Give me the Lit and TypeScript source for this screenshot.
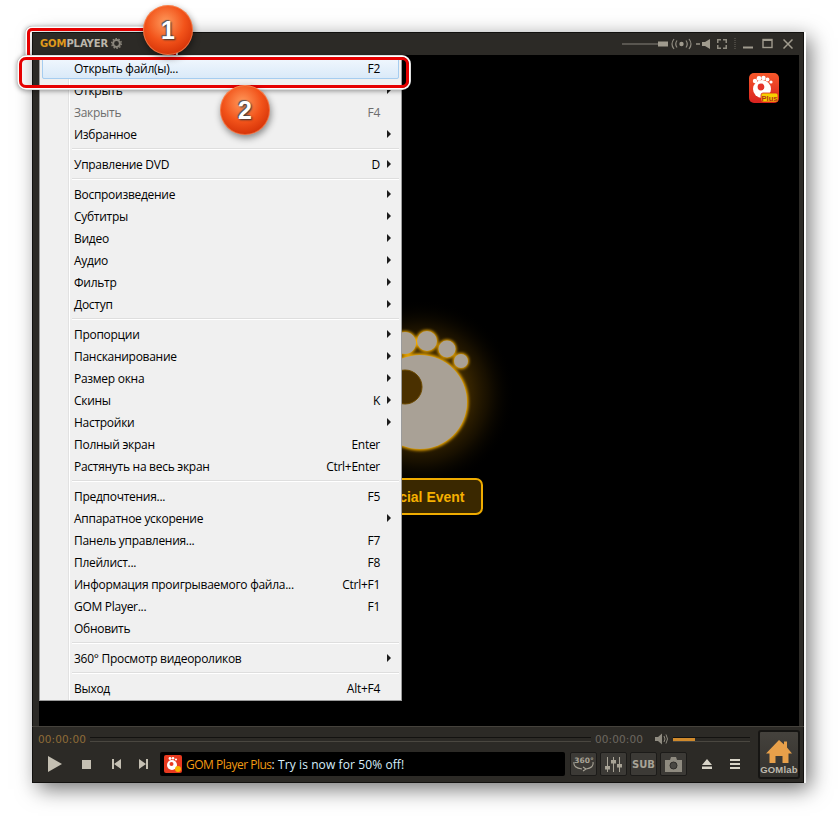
import { LitElement, html, css, svg } from "lit";
import { customElement } from "lit/decorators.js";

type Row = { t: string; k?: string; sub?: boolean; dis?: boolean; hot?: boolean } | null;
const rows: Row[] = [
  { t: "Открыть файл(ы)...", k: "F2", hot: true },
  { t: "Открыть", sub: true },
  { t: "Закрыть", k: "F4", dis: true },
  { t: "Избранное", sub: true },
  null,
  { t: "Управление DVD", k: "D", sub: true },
  null,
  { t: "Воспроизведение", sub: true },
  { t: "Субтитры", sub: true },
  { t: "Видео", sub: true },
  { t: "Аудио", sub: true },
  { t: "Фильтр", sub: true },
  { t: "Доступ", sub: true },
  null,
  { t: "Пропорции", sub: true },
  { t: "Пансканирование", sub: true },
  { t: "Размер окна", sub: true },
  { t: "Скины", k: "K", sub: true },
  { t: "Настройки", sub: true },
  { t: "Полный экран", k: "Enter" },
  { t: "Растянуть на весь экран", k: "Ctrl+Enter" },
  null,
  { t: "Предпочтения...", k: "F5" },
  { t: "Аппаратное ускорение", sub: true },
  { t: "Панель управления...", k: "F7" },
  { t: "Плейлист...", k: "F8" },
  { t: "Информация проигрываемого файла...", k: "Ctrl+F1" },
  { t: "GOM Player...", k: "F1" },
  { t: "Обновить" },
  null,
  { t: "360° Просмотр видеороликов", sub: true },
  null,
  { t: "Выход", k: "Alt+F4" },
];

const foot = svg`
  <defs>
    <radialGradient id="gl" cx="50%" cy="50%" r="50%">
      <stop offset="0" stop-color="#a87200" stop-opacity=".6"/>
      <stop offset=".5" stop-color="#8a5c00" stop-opacity=".42"/>
      <stop offset=".72" stop-color="#6a4600" stop-opacity=".22"/>
      <stop offset="1" stop-color="#000" stop-opacity="0"/>
    </radialGradient>
    <filter id="bl" x="-30%" y="-30%" width="160%" height="160%"><feGaussianBlur stdDeviation="1.4"/></filter>
  </defs>
  <circle cx="111" cy="104" r="95" fill="url(#gl)"/>
  <g fill="#f5ad00" filter="url(#bl)">
    <circle cx="111" cy="112" r="48.5"/><circle cx="96" cy="53" r="12"/><circle cx="118" cy="51" r="11"/>
    <circle cx="138" cy="59" r="9.5"/><circle cx="152" cy="71" r="8"/>
  </g>
  <g fill="#a9a196">
    <circle cx="111" cy="112" r="47"/><circle cx="96" cy="53" r="11"/><circle cx="118" cy="51" r="10"/>
    <circle cx="138" cy="59" r="8.5"/><circle cx="152" cy="71" r="7"/>
  </g>
  <circle cx="96" cy="97" r="17" fill="#4a3000" stroke="#6d4a00" stroke-width="1"/>
`;

@customElement("app-root")
export class AppRoot extends LitElement {
  static styles = css`
    :host { display: block; width: 838px; height: 816px; background: #fff; padding: 32px 34px 33px 32px; box-sizing: border-box; font-family: "Open Sans", "Liberation Sans", sans-serif; overflow: hidden; }
    .win { position: relative; height: 100%; display: flex; flex-direction: column; background: #2c2a26; box-shadow: 6px 6px 20px rgba(0,0,0,.55), inset 0 0 0 1px #12110f; }
    .win::after { content: ""; position: absolute; left: 100%; top: 0; bottom: 0; width: 2px; background: linear-gradient(#fff, #f2f2f2); }
    .title { height: 23px; flex: none; display: flex; align-items: center; padding: 0 11px 0 8px; }
    .logo { font: bold 10px "DejaVu Sans", sans-serif; letter-spacing: -.1px; color: #bcb7ab; display: flex; align-items: center; gap: 3px; }
    .logo b { color: #e09a1c; }
    .tools { margin-left: auto; display: flex; align-items: center; }
    .body { flex: 1; margin: 0 5px 0 7px; background: #000; position: relative; display: flex; flex-direction: column; align-items: center; }
    .foot { margin-top: 235px; margin-bottom: -12px; display: block; flex: none; }
    .event { width: 128px; height: 37px; flex: none; box-sizing: border-box; border: 2px solid #f0ac00; border-radius: 7px; background: #3a2800; color: #f5b000; font: bold 14px "Liberation Sans", sans-serif; display: flex; align-items: center; justify-content: center; }
    .plus { position: absolute; left: 710px; top: 18px; }
    .ctl { height: 57px; flex: none; box-sizing: border-box; border-top: 1px solid #45423c; display: flex; flex-direction: column; }
    .row1 { height: 24px; display: flex; align-items: center; padding-left: 6px; width: 718px; box-sizing: border-box; }
    .time { font: 10.5px "DejaVu Sans", sans-serif; color: #8f6c38; letter-spacing: .1px; width: 50px; white-space: nowrap; flex: none; }
    .time.r { color: #6c6860; margin-left: 4px; }
    .seek { flex: 1; height: 3px; margin-left: 2px; border-top: 1px solid #131210; border-bottom: 1px solid #4a4740; }
    .spk { margin-left: 10px; }
    .vol { margin-left: 4px; width: 77px; height: 3px; border-top: 1px solid #131210; border-bottom: 1px solid #4a4740; position: relative; }
    .vol i { display: block; width: 22px; height: 3px; background: #d08a2c; }
    .row2 { display: flex; align-items: center; padding-left: 16px; height: 26px; }
    .row2 > svg { flex: none; }
    .tick { width: 405px; height: 24px; margin-left: 12px; background: #000; border-radius: 2px; display: flex; align-items: center; gap: 4px; padding-left: 4px; box-sizing: border-box; font-size: 12px; letter-spacing: .1px; color: #d8eefb; white-space: nowrap; }
    .tick b { font-weight: 400; color: #f29a12; letter-spacing: -.5px; }
    .btns { display: flex; gap: 3px; margin-left: 5px; }
    .btn { width: 27px; height: 24px; box-sizing: border-box; background: #3c3a36; border: 1px solid #1c1b19; border-radius: 2px; display: flex; align-items: center; justify-content: center; font: bold 10px "DejaVu Sans", sans-serif; color: #a8a396; }
    .home { position: absolute; right: 4px; bottom: 4px; width: 42px; height: 49px; box-sizing: border-box; background: linear-gradient(#45423d, #33312d); border: 2px solid #161513; border-radius: 3px; display: flex; flex-direction: column; align-items: center; padding-top: 8px; font: bold 9.500px "Liberation Sans", sans-serif; color: #bdb8ad; letter-spacing: .2px; }
    .home span { margin-top: 1px; }
    .menu { position: absolute; left: 7px; top: 24px; width: 363px; height: 645px; box-sizing: border-box; background: #f0f0f0; border: 1px solid #9b9b9b; padding: 0 2px; font-size: 12px; letter-spacing: -.28px; color: #000; }
    .gut { position: absolute; left: 28px; top: 0; bottom: 0; width: 2px; background: linear-gradient(90deg, #e2e2e2 50%, #fff 50%); }
    .it { height: 22px; display: flex; align-items: center; padding-left: 32px; position: relative; box-sizing: border-box; white-space: nowrap; }
    .it.dis { color: #6d6d6d; }
    .it.hot { background: linear-gradient(#f2f8fe, #d9e9f8); outline: 1px solid #a6cdf0; outline-offset: -1px; border-radius: 2px; }
    .k { position: absolute; right: 19px; }
    .arr { position: absolute; right: 8px; top: 7px; width: 0; height: 0; border-left: 4px solid #1c1c1c; border-top: 4px solid transparent; border-bottom: 4px solid transparent; }
    .sep { height: 8px; margin-left: 28px; position: relative; }
    .sep::after { content: ""; position: absolute; left: 2px; right: 0; top: 3px; height: 2px; background: linear-gradient(#dedede 50%, #fff 50%); }
    .mark { position: absolute; box-sizing: border-box; border: 3px solid #e60000; border-radius: 5px; box-shadow: 0 0 0 1.5px #fff, 0 0 0 2px #bbb, 0 1px 5px 2px rgba(0,0,0,.4); }
    .m1 { left: -5px; top: -4px; width: 149px; height: 31px; border-bottom-color: transparent; clip-path: inset(-6px -6px 3px -6px); }
    .m2 { left: -13px; top: 25px; width: 390px; height: 31px; border-radius: 7px; }
    .ball { position: absolute; width: 50px; height: 50px; border-radius: 50%; background: radial-gradient(circle at 45% 35%, #ff9a5c, #f2531a 45%, #c92500 90%); box-shadow: 1px 3px 7px rgba(0,0,0,.45), inset 0 0 0 1px rgba(255,190,140,.4); display: flex; align-items: center; justify-content: center; font: bold 25px "Liberation Sans", sans-serif; color: #fff; text-shadow: 1px 1px 2px #333, -1px -1px 1px #555; }
    .b1 { left: 111px; top: -27px; }
    .b2 { left: 188px; top: 53px; }
  `;

  render() {
    return html`<div class="win">
      <div class="title">
        <div class="logo"><span><b>GOM</b>PLAYER</span>
          <svg width="11" height="11" viewBox="0 0 11 11"><circle cx="5.5" cy="5.5" r="3.4" fill="none" stroke="#8b867c" stroke-width="2"/><circle cx="5.5" cy="5.5" r="4.8" fill="none" stroke="#8b867c" stroke-width="1.4" stroke-dasharray="1.5 1.5"/></svg>
        </div>
        <div class="tools">
          <svg width="160" height="14" viewBox="0 0 160 14">
            <path d="M0 7h36" stroke="#86827a" stroke-width="1"/><rect x="36" y="4.5" width="10" height="5" fill="#a09b8e"/>
            <g transform="translate(-6 0)" fill="none" stroke="#8f8b80" stroke-width="1.2"><path d="M58 2q-4 5 0 10M61 3.500q-2.500 3.500 0 7M70 3.500q2.500 3.500 0 7M73 2q4 5 0 10"/></g><circle cx="59.500" cy="7" r="2.200" fill="#a09b8e"/>
            <g transform="translate(-6 0)"><path d="M80 7h4" stroke="#a09b8e" stroke-width="1.400"/><path d="M86 5h3l5-3v10l-5-3h-3z" fill="#a09b8e"/></g>
            <g transform="translate(-8 0)" fill="#8f8b80"><path d="M103 2h4v1.500h-2.500v2.500h-1.500zM113 2v4h-1.500v-2.500h-2.500v-1.500zM103 12v-4h1.500v2.500h2.500v1.500zM113 12h-4v-1.500h2.500v-2.500h1.500z"/></g>
            <path d="M113 1v12" stroke="#68645c" stroke-dasharray="1 1"/>
            <path d="M121 10.500h10" stroke="#a09b8e" stroke-width="2"/>
            <rect x="141" y="2.500" width="9" height="8" fill="none" stroke="#a09b8e" stroke-width="1.400"/><path d="M141 3h9" stroke="#a09b8e" stroke-width="2"/>
          </svg>
          <svg style="margin-left:1px" width="10" height="10" viewBox="0 0 10 10"><path d="M.5.500l9 9M9.500.500l-9 9" stroke="#a09b8e" stroke-width="1.500"/></svg>
        </div>
      </div>
      <div class="body">
        <svg class="foot" width="220" height="200" viewBox="0 0 220 200">${foot}</svg>
        <div class="event">Special Event</div>
        <svg class="plus" width="30" height="30" viewBox="0 0 30 30">
          <defs><linearGradient id="pl" x1="0" y1="0" x2="0" y2="1"><stop offset="0" stop-color="#f7582a"/><stop offset="1" stop-color="#d9221f"/></linearGradient></defs>
          <rect width="30" height="30" rx="5" fill="url(#pl)"/>
          <g fill="#fff"><circle cx="13" cy="16" r="9"/><circle cx="10" cy="5.500" r="2.400"/><circle cx="14.500" cy="5" r="2.200"/><circle cx="18.500" cy="6.500" r="1.900"/><circle cx="22" cy="9" r="1.600"/><circle cx="6" cy="8" r="2.200"/></g>
          <circle cx="12" cy="14" r="3.400" fill="#e5332a"/>
          <rect x="12" y="20" width="17" height="9" rx="2" fill="#f6d000" stroke="#d9221f" stroke-width=".8"/>
          <text x="20.500" y="27.500" text-anchor="middle" font-family="Liberation Sans" font-weight="700" font-size="7.500" fill="#b3301a">Plus</text>
        </svg>
      </div>
      <div class="ctl">
        <div class="row1">
          <span class="time">00:00:00</span><div class="seek"></div><span class="time r">00:00:00</span>
          <svg class="spk" width="14" height="12" viewBox="0 0 14 12"><path d="M0 4h3l4-3.500v11l-4-3.500h-3z" fill="#8f8b80"/><path d="M9 3q2 3 0 6M11 1.500q3 4.500 0 9" fill="none" stroke="#8f8b80"/></svg>
          <div class="vol"><i></i></div>
        </div>
        <div class="row2">
          <svg width="14" height="16" viewBox="0 0 14 16"><path d="M0 0l14 8-14 8z" fill="#c4bfb2"/></svg>
          <svg style="margin-left:20px" width="9" height="9" viewBox="0 0 9 9"><rect width="9" height="9" fill="#c4bfb2"/></svg>
          <svg style="margin-left:21px" width="9" height="10" viewBox="0 0 9 10"><path d="M0 0h2v10h-2zM9 0v10l-7-5z" fill="#c4bfb2"/></svg>
          <svg style="margin-left:18px" width="9" height="10" viewBox="0 0 9 10"><path d="M9 0h-2v10h2zM0 0v10l7-5z" fill="#c4bfb2"/></svg>
          <div class="tick">
            <svg style="flex:none" width="18" height="18" viewBox="0 0 18 18"><rect width="18" height="18" rx="2" fill="#e8391f"/><circle cx="8" cy="10" r="5" fill="#fff"/><circle cx="6" cy="3.500" r="1.400" fill="#fff"/><circle cx="9" cy="3.300" r="1.300" fill="#fff"/><circle cx="12" cy="4.500" r="1.100" fill="#fff"/><circle cx="7.500" cy="9" r="2" fill="#e8391f"/><circle cx="14" cy="14" r="3" fill="#f7b500"/></svg>
            <span><b>GOM Player Plus</b>: Try is now for 50% off!</span>
          </div>
          <div class="btns">
            <div class="btn"><svg width="23" height="20" viewBox="0 0 23 20"><text x="12" y="8.500" text-anchor="middle" font-family="DejaVu Sans" font-weight="700" font-size="7.500" fill="#a8a396">360°</text><path d="M2 8q-1 6 8 7M21 8q1 6-7 7M11 13l3 2-3 2" fill="none" stroke="#a8a396" stroke-width="1.100"/></svg></div>
            <div class="btn"><svg width="17" height="17" viewBox="0 0 17 17"><path d="M2.500 1v15M8.500 1v15M14.500 1v15" stroke="#a8a396"/><rect x="0" y="10" width="5" height="3.500" fill="#a8a396"/><rect x="6" y="4" width="5" height="3.500" fill="#a8a396"/><rect x="12" y="8" width="5" height="3.500" fill="#a8a396"/></svg></div>
            <div class="btn">SUB</div>
            <div class="btn"><svg width="17" height="15" viewBox="0 0 17 15"><path d="M0 3h5l1-3h5l1 3h5v12h-17z" fill="#8f8b80"/><circle cx="8.500" cy="8.500" r="3.500" fill="#4a4843" stroke="#2e2c29"/></svg></div>
          </div>
          <svg style="margin-left:15px" width="10" height="10" viewBox="0 0 10 10"><path d="M5 0l5 6h-10z M0 7.500h10v2.500h-10z" fill="#d8d4c8"/></svg>
          <svg style="margin-left:18px" width="10" height="10" viewBox="0 0 10 10"><path d="M0 0h10v2h-10zM0 4h10v2h-10zM0 8h10v2h-10z" fill="#d8d4c8"/></svg>
        </div>
        <div class="home">
          <svg width="26" height="23" viewBox="0 0 26 23"><path d="M13 0l5 4.500v-3h3v6l5 6h-3.500v9.500h-6v-7h-7v7h-6v-9.500h-3.500z" fill="#e8a04a"/></svg>
          <span>GOMlab</span>
        </div>
      </div>

      <div class="menu">
        <div class="gut"></div>
        ${rows.map((r) =>
          r === null
            ? html`<div class="sep"></div>`
            : html`<div class="it ${r.dis ? "dis" : ""} ${r.hot ? "hot" : ""}">
                ${r.t}${r.k ? html`<span class="k">${r.k}</span>` : ""}${r.sub ? html`<i class="arr"></i>` : ""}
              </div>`
        )}
      </div>
      <div class="mark m1"></div>
      <div class="mark m2"></div>
      <div class="ball b1">1</div>
      <div class="ball b2">2</div>
    </div>`;
  }
}
